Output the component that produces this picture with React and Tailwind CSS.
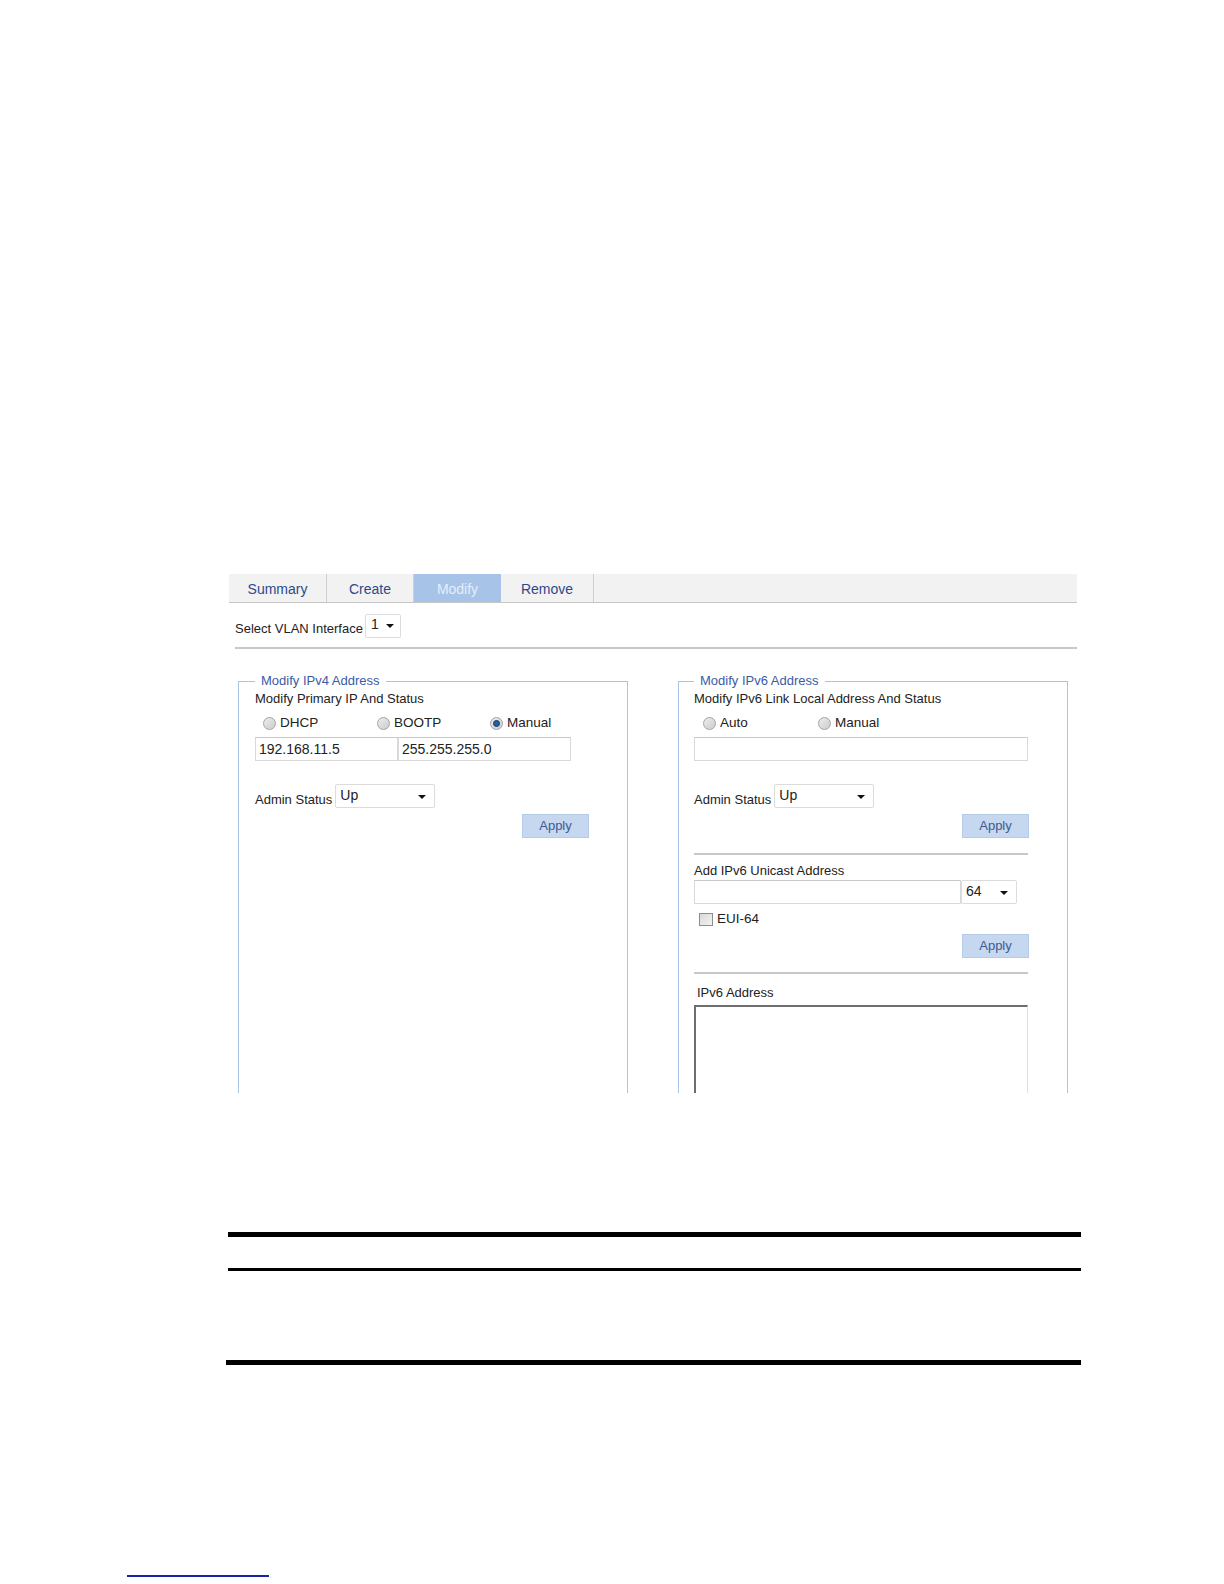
import React from 'react';

function Radio({ label, checked, width }) {
  return (
    <div className={`flex items-center gap-[4px] ${width}`}>
      <span className="w-[13px] h-[13px] rounded-full border border-[#a3a3a3] bg-gradient-to-br from-[#ececec] to-[#cdcdcd] flex items-center justify-center">
        {checked && <span className="w-[7px] h-[7px] rounded-full bg-[#1f64a3] border border-[#0f3d6b]" />}
      </span>
      <span className="text-[13.5px] leading-[16px] text-[#222]">{label}</span>
    </div>
  );
}

function Caret() {
  return <span className="w-0 h-0 border-l-[4px] border-r-[4px] border-t-[4px] border-l-transparent border-r-transparent border-t-[#111]" />;
}

function SelectBox({ value, width }) {
  return (
    <div className={`${width} h-[24px] border border-[#dcdcdc] rounded-[2px] bg-white flex items-start justify-between pl-[4px] pr-[8px]`}>
      <span className="text-[14px] leading-[20px] text-[#222]">{value}</span>
      <span className="mt-[10px] flex"><Caret /></span>
    </div>
  );
}

function TextBox({ value, width }) {
  return (
    <div className={`${width} h-[24px] border border-[#d9d9d9] border-t-[#c9c9c9] bg-white px-[3px] text-[14px] leading-[22px] text-[#222]`}>
      {value}
    </div>
  );
}

function ApplyButton() {
  return (
    <div className="w-[67px] h-[24px] bg-[#c6d7f0] border border-[#b7cbea] flex items-center justify-center text-[13px] text-[#3d5a93]">
      Apply
    </div>
  );
}

function Panel({ title, inset, children }) {
  return (
    <fieldset className="w-[390px] h-[470px] border border-[#a9c4e4] p-0">
      <legend className={`${inset === 15 ? 'ml-[15px]' : 'ml-[16px]'} px-[6px] text-[13px] leading-[16px] text-[#3b5ba6]`}>{title}</legend>
      <div className={inset === 15 ? 'pl-[15px]' : 'pl-[16px]'}>{children}</div>
    </fieldset>
  );
}

const tabs = [
  { name: 'Summary', w: 'w-[98px]' },
  { name: 'Create', w: 'w-[87px]' },
  { name: 'Modify', w: 'w-[87px]', active: true },
  { name: 'Remove', w: 'w-[93px]' },
];

export default function App() {
  return (
    <div className="h-[1584px] w-[1224px] overflow-hidden bg-white font-['Liberation_Sans',Arial,sans-serif] text-[#222]">
      <div className="pt-[574px] pl-[229px]">
        <div className="w-[848px] h-[519px] overflow-hidden">
          {/* tab strip */}
          <div className="flex h-[29px] bg-[#f2f2f2] border-b border-[#c6c6c6]">
            {tabs.map((t) => (
              <div
                key={t.name}
                className={`${t.w} flex items-center justify-center pt-[3px] text-[14px] ${t.active ? 'bg-[#a7c3e8] text-[#e6eef9]' : 'border-r border-[#cfcfcf] text-[#2c4a8a]'}`}
              >
                {t.name}
              </div>
            ))}
          </div>

          {/* interface picker */}
          <div className="flex items-end mt-[11px] pl-[6px] h-[24px]">
            <span className="text-[13px] leading-[16px] mb-[1px]">Select VLAN Interface</span>
            <div className="ml-[2px] w-[36px] h-[24px] border border-[#dcdcdc] rounded-[2px] flex items-start justify-between pl-[5px] pr-[6px]">
              <span className="text-[14px] leading-[18px]">1</span>
              <span className="mt-[9px] flex"><Caret /></span>
            </div>
          </div>
          <div className="ml-[6px] mt-[9px] h-[2px] bg-[#c8c8c8]" />

          <div className="flex mt-[24px] ml-[9px] gap-[50px]">
            <Panel title="Modify IPv4 Address" inset={16}>
              <div className="text-[13px] leading-[16px] mt-[2px]">Modify Primary IP And Status</div>
              <div className="flex items-center mt-[8px] h-[16px] pl-[8px]">
                <Radio label="DHCP" width="w-[114px]" />
                <Radio label="BOOTP" width="w-[113px]" />
                <Radio label="Manual" checked width="w-[100px]" />
              </div>
              <div className="flex mt-[6px]">
                <TextBox value="192.168.11.5" width="w-[143px]" />
                <TextBox value="255.255.255.0" width="w-[173px]" />
              </div>
              <div className="flex items-end mt-[23px]">
                <span className="text-[13px] leading-[16px]">Admin Status</span>
                <div className="ml-[3px]"><SelectBox value="Up" width="w-[100px]" /></div>
              </div>
              <div className="flex w-[334px] justify-end mt-[6px]">
                <ApplyButton />
              </div>
            </Panel>

            <Panel title="Modify IPv6 Address" inset={15}>
              <div className="text-[13px] leading-[16px] mt-[2px]">Modify IPv6 Link Local Address And Status</div>
              <div className="flex items-center mt-[8px] h-[16px] pl-[9px]">
                <Radio label="Auto" width="w-[115px]" />
                <Radio label="Manual" width="w-[115px]" />
              </div>
              <div className="mt-[6px]">
                <TextBox value="" width="w-[334px]" />
              </div>
              <div className="flex items-end mt-[23px]">
                <span className="text-[13px] leading-[16px]">Admin Status</span>
                <div className="ml-[3px]"><SelectBox value="Up" width="w-[100px]" /></div>
              </div>
              <div className="flex w-[335px] justify-end mt-[6px]">
                <ApplyButton />
              </div>
              <div className="w-[334px] h-[2px] bg-[#c8c8c8] mt-[15px]" />
              <div className="text-[13px] leading-[16px] mt-[8px]">Add IPv6 Unicast Address</div>
              <div className="flex mt-[1px]">
                <TextBox value="" width="w-[267px]" />
                <SelectBox value="64" width="w-[56px]" />
              </div>
              <div className="flex items-center gap-[4px] mt-[7px] h-[16px] pl-[5px]">
                <span className="w-[14px] h-[13px] border border-[#8e8e8e] bg-gradient-to-br from-[#d8d8d8] to-[#f4f4f4]" />
                <span className="text-[13.5px] leading-[16px]">EUI-64</span>
              </div>
              <div className="flex w-[335px] justify-end mt-[7px]">
                <ApplyButton />
              </div>
              <div className="w-[334px] h-[2px] bg-[#c8c8c8] mt-[14px]" />
              <div className="text-[13px] leading-[16px] mt-[11px] pl-[3px]">IPv6 Address</div>
              <div className="w-[334px] h-[140px] mt-[4px] border-l-2 border-t-2 border-r border-b border-l-[#6e6e6e] border-t-[#6e6e6e] border-r-[#e0e0e0] border-b-[#e0e0e0]" />
            </Panel>
          </div>
        </div>
      </div>

      <div className="ml-[228px] w-[853px] mt-[139px]">
        <div className="h-[5px] bg-black" />
        <div className="h-[3px] bg-black mt-[31px]" />
      </div>
      <div className="ml-[226px] w-[855px] mt-[89px] h-[5px] bg-black" />

      <div className="ml-[127px] mt-[210px] w-[142px] h-[2px] bg-[#1a22a8]" />
    </div>
  );
}
